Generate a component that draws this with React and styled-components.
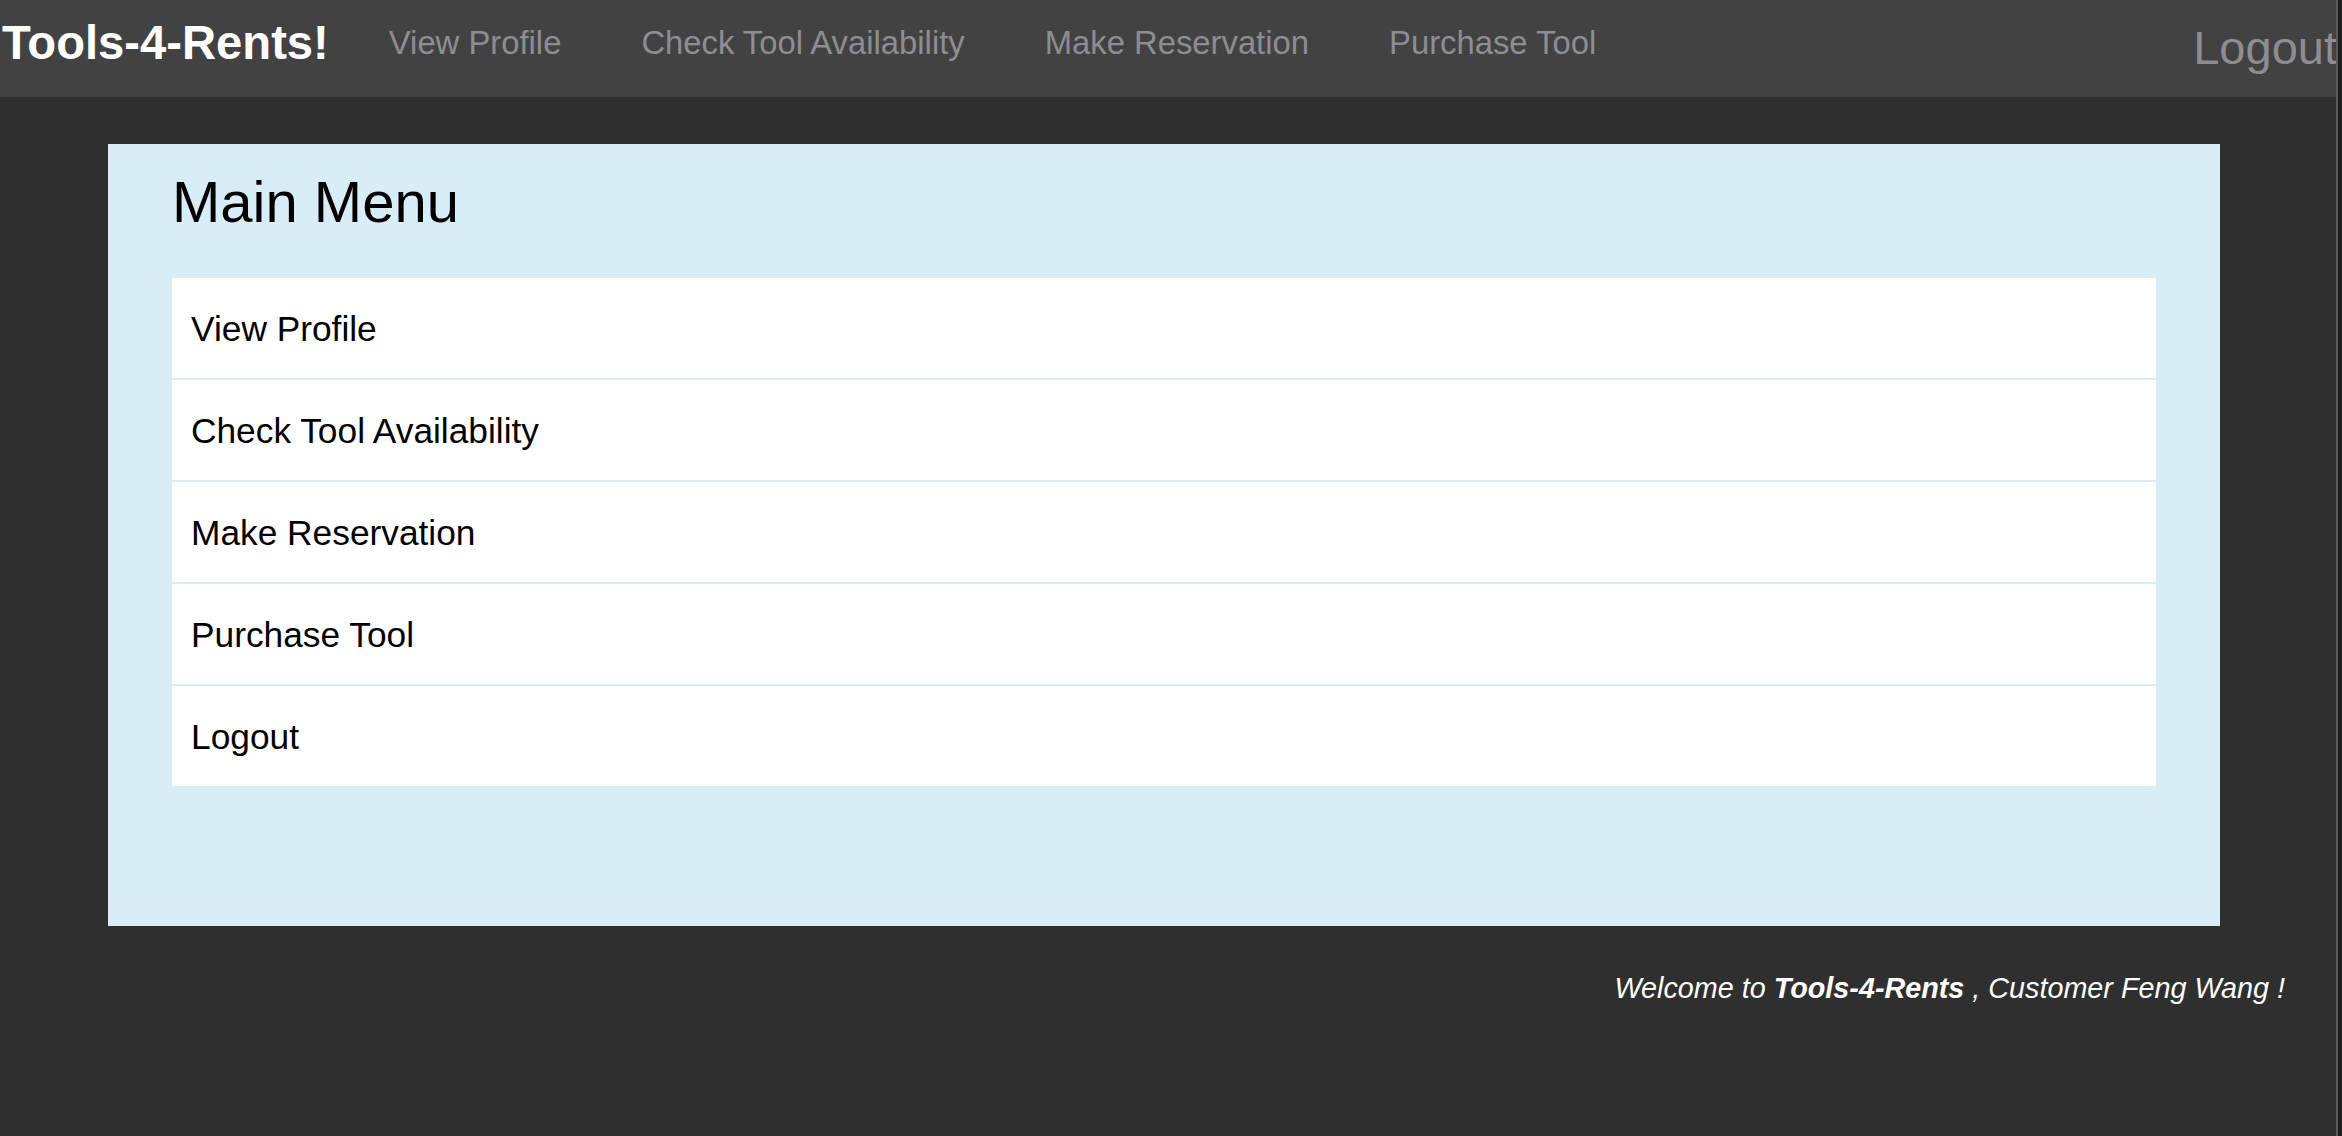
import React from 'react';
import styled, { createGlobalStyle } from 'styled-components';

const GlobalStyle = createGlobalStyle`
  html, body {
    margin: 0;
    padding: 0;
    background: #2f2f2f;
    font-family: "Liberation Sans", Arial, Helvetica, sans-serif;
  }
`;

const navLinks = ['View Profile', 'Check Tool Availability', 'Make Reservation', 'Purchase Tool'];
const menuItems = ['View Profile', 'Check Tool Availability', 'Make Reservation', 'Purchase Tool', 'Logout'];

const App = () => {
  return (
    <>
      <GlobalStyle />
      <Frame>
        <Page>
          <Navbar>
            <Brand>Tools-4-Rents!</Brand>
            {navLinks.map((label) => (
              <NavLink key={label}>{label}</NavLink>
            ))}
            <NavLogout>Logout</NavLogout>
          </Navbar>

          <Panel>
            <Title>Main Menu</Title>
            <MenuList>
              {menuItems.map((label) => (
                <MenuItem key={label}>{label}</MenuItem>
              ))}
            </MenuList>
          </Panel>

          <Welcome>
            Welcome to <strong>Tools-4-Rents</strong> , Customer Feng Wang !
          </Welcome>
        </Page>
        <WindowEdge />
      </Frame>
    </>
  );
};

const Frame = styled.div`
  display: flex;
  min-height: 100vh;
  background: #2f2f2f;
`;

const Page = styled.div`
  flex: 1;
  min-width: 0;
  overflow: hidden;
  display: flex;
  flex-direction: column;
`;

const WindowEdge = styled.div`
  width: 4px;
  flex-shrink: 0;
  background: #1c1c1c;
  border-left: 2px solid #5b5b5b;
`;

const Navbar = styled.nav`
  height: 97px;
  background: #424242;
  display: flex;
  align-items: flex-start;
  overflow: hidden;
  white-space: nowrap;
`;

const Brand = styled.a`
  padding: 19px 0 0 2px;
  margin-right: 20px;
  font-size: 47.2px;
  line-height: 1;
  font-weight: 700;
  color: #ffffff;
`;

const NavLink = styled.a`
  padding: 27px 40px 0;
  font-size: 32.8px;
  line-height: 1;
  color: #8d8d92;
`;

const NavLogout = styled.a`
  margin-left: auto;
  margin-right: -1px;
  padding-top: 24px;
  font-size: 47px;
  line-height: 1;
  color: #8d8d92;
`;

const Panel = styled.section`
  margin: 47px 0 0 108px;
  width: 2112px;
  box-sizing: border-box;
  background: #d9edf7;
  padding: 29px 64px 140px;
`;

const Title = styled.h1`
  margin: 0 0 47px;
  font-size: 58px;
  line-height: 1;
  font-weight: 400;
  color: #000000;
`;

const MenuList = styled.div`
  display: flex;
  flex-direction: column;
  gap: 2px;
`;

const MenuItem = styled.a`
  height: 100px;
  box-sizing: border-box;
  display: flex;
  align-items: center;
  padding: 2px 0 0 19px;
  background: #ffffff;
  font-size: 35.3px;
  line-height: 1;
  color: #000000;
`;

const Welcome = styled.p`
  margin: 48px 0 0;
  padding-right: 51px;
  text-align: right;
  font-size: 28.75px;
  line-height: 1;
  font-style: italic;
  color: #ffffff;

  strong {
    font-weight: 700;
  }
`;

export default App;
